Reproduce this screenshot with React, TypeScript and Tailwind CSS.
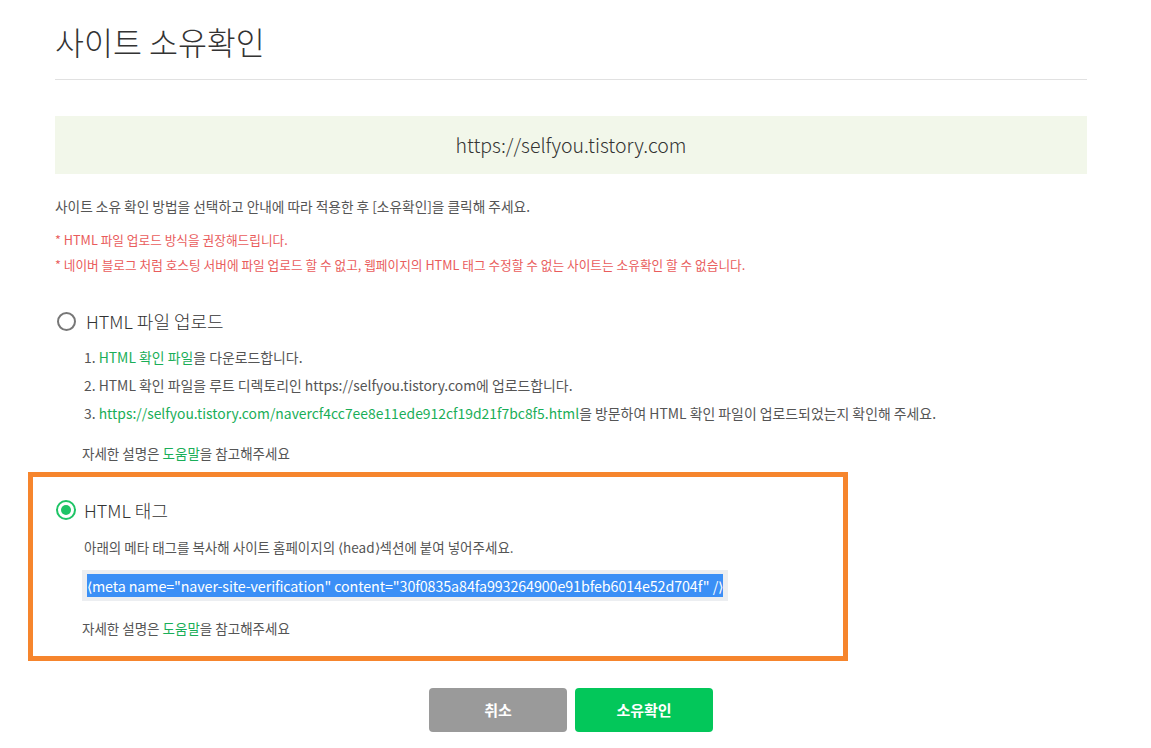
import React from "react";

const font = { fontFamily: '"Noto Sans CJK KR", "Noto Sans", sans-serif' };

const Help = () => (
  <p className="text-[13.5px] leading-[20px] text-[#555]">
    자세한 설명은 <span className="text-[#1aae58]">도움말</span>을 참고해주세요
  </p>
);

const App = () => {
  return (
    <div style={font} className="w-[1151px] h-[748px] bg-white overflow-hidden">
      <div className="ml-[55px] w-[1032px] flex flex-col">
        <h1 className="pt-[21px] text-[31.5px] leading-[40px] text-[#333] font-light">사이트 소유확인</h1>
        <div className="mt-[18px] h-px bg-[#e1e1e1]"></div>

        <div className="mt-[36px] h-[58px] bg-[#f2f7ea] flex items-center justify-center text-[19.5px] font-light text-[#333]">
          https://selfyou.tistory.com
        </div>

        <p className="mt-[22px] text-[13.7px] leading-[20px] text-[#555]">
          사이트 소유 확인 방법을 선택하고 안내에 따라 적용한 후 [소유확인]을 클릭해 주세요.
        </p>
        <p className="mt-[14px] text-[12.7px] leading-[20px] text-[#e95c5c]">* HTML 파일 업로드 방식을 권장해드립니다.</p>
        <p className="mt-[5px] text-[12.7px] leading-[20px] text-[#e95c5c]">
          * 네이버 블로그 처럼 호스팅 서버에 파일 업로드 할 수 없고, 웹페이지의 HTML 태그 수정할 수 없는 사이트는 소유확인 할 수 없습니다.
        </p>

        <div className="mt-[34px] flex items-center gap-[10px] pl-[2px]">
          <span className="w-[19px] h-[19px] rounded-full border-2 border-[#777]"></span>
          <span className="text-[18px] leading-[24px] text-[#333] font-light">HTML 파일 업로드</span>
        </div>
        <div className="ml-[29px] mt-[10px] flex flex-col text-[13.9px] leading-[28px] text-[#555]">
          <p>
            1. <span className="text-[#1aae58]">HTML 확인 파일</span>을 다운로드합니다.
          </p>
          <p>2. HTML 확인 파일을 루트 디렉토리인 https://selfyou.tistory.com에 업로드합니다.</p>
          <p>
            3. <span className="text-[#1aae58]">https://selfyou.tistory.com/navercf4cc7ee8e11ede912cf19d21f7bc8f5.html</span>을 방문하여 HTML 확인 파일이 업로드되었는지 확인해 주세요.
          </p>
          <div className="mt-[16px] ml-[-2px]">
            <Help />
          </div>
        </div>

        <div className="mt-[9px] ml-[-27px] w-[820px] border-[5px] border-[#f6852d] pl-[23px] pt-[21px] pb-[18px]">
          <div className="flex items-center gap-[8px]">
            <span className="w-[20px] h-[20px] rounded-full border-2 border-[#1ec466] flex items-center justify-center">
              <span className="w-[10px] h-[10px] rounded-full bg-[#1ec466]"></span>
            </span>
            <span className="text-[18px] leading-[24px] text-[#333] font-light">HTML 태그</span>
          </div>
          <div className="ml-[28px]">
            <p className="mt-[15px] text-[13.5px] leading-[20px] text-[#555]">
              아래의 메타 태그를 복사해 사이트 홈페이지의 ⟨head⟩섹션에 붙여 넣어주세요.
            </p>
            <div className="mt-[13px] ml-[-2px] w-[646px] h-[31px] bg-[#eceef1] flex items-center px-[5px]">
              <span className="bg-[#3b8ff6] text-white text-[14.3px] leading-[23px] w-full whitespace-nowrap tracking-[-0.1px]">
                ⟨meta name="naver-site-verification" content="30f0835a84fa993264900e91bfeb6014e52d704f" /⟩
              </span>
            </div>
            <div className="mt-[17px] ml-[-2px]">
              <Help />
            </div>
          </div>
        </div>

        <div className="mt-[27px] flex justify-center gap-[8px]">
          <button className="w-[138px] h-[44px] rounded-[4px] bg-[#9a9a9a] text-white text-[15px] font-bold">취소</button>
          <button className="w-[138px] h-[44px] rounded-[4px] bg-[#03c75a] text-white text-[15px] font-bold">소유확인</button>
        </div>
      </div>
    </div>
  );
};

export default App;
